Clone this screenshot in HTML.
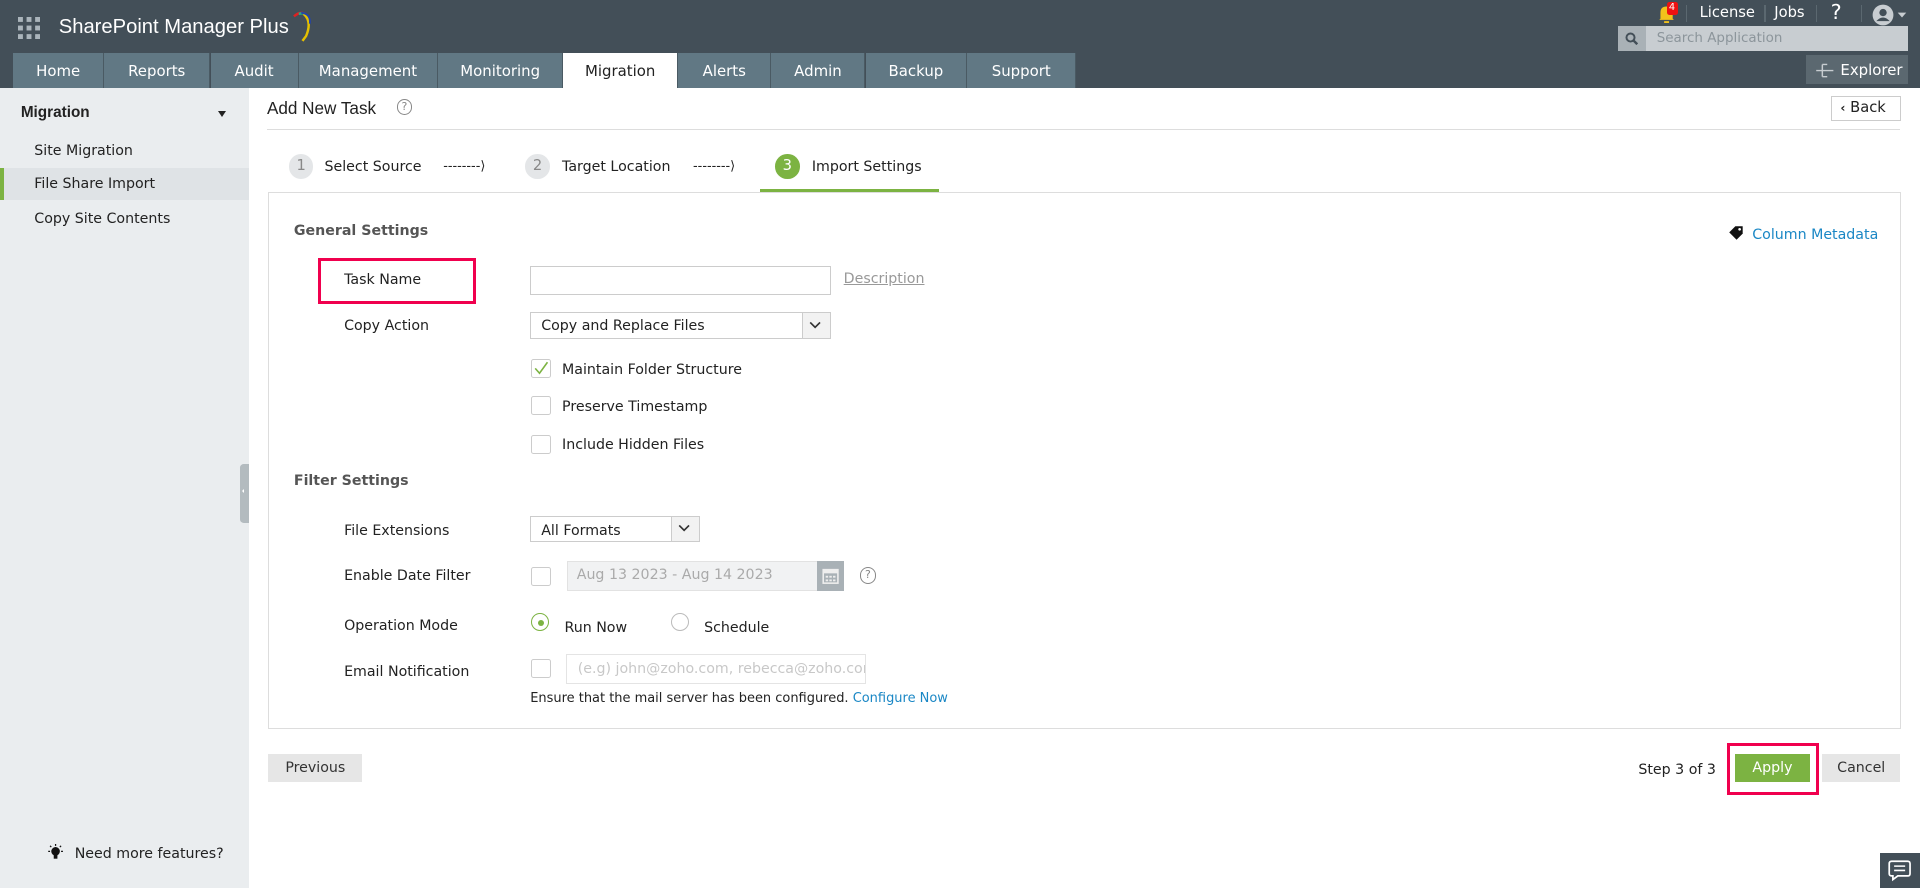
<!DOCTYPE html>
<html><head><meta charset="utf-8"><style>
html,body{margin:0;padding:0;overflow:hidden;background:#fff}
#root{zoom:1.22449;width:1568px;height:725px;position:relative;font-family:"DejaVu Sans","Liberation Sans",sans-serif;font-size:11.6px;color:#222;overflow:hidden}
.a{position:absolute}
.hdr{left:0;top:0;width:1568px;height:72px;background:#434f58}
.tab{top:43px;height:29px;background:#617884;color:#fff;font-size:12.2px;line-height:30px;text-align:center;border-right:1px solid #4a5a63}
.tab.act{background:#fff;color:#222}
.side{left:0;top:72px;width:203px;height:653px;background:#eaedef}
.lbl{font-size:11.6px;color:#222;margin-top:1px}
.cb{width:14px;height:14px;border:1px solid #ccc;background:#fff;border-radius:2px}
.inp{border:1px solid #ccc;background:#fff}
.sec{font-weight:bold;color:#555;font-size:11.6px;margin-top:1px}
</style></head><body><div id="root">
<div class="a hdr"></div>
<svg class="a" style="left:15px;top:14px" width="18" height="18"><g fill="#aab4bb"><rect x="0" y="0" width="4" height="4"/><rect x="7" y="0" width="4" height="4"/><rect x="14" y="0" width="4" height="4"/><rect x="0" y="7" width="4" height="4"/><rect x="7" y="7" width="4" height="4"/><rect x="14" y="7" width="4" height="4"/><rect x="0" y="14" width="4" height="4"/><rect x="7" y="14" width="4" height="4"/><rect x="14" y="14" width="4" height="4"/></g></svg>
<div class="a" style="left:48px;top:13px;color:#fff;font-size:16.5px;font-family:'Liberation Sans',sans-serif">SharePoint Manager Plus</div>
<svg class="a" style="left:236px;top:7px" width="20" height="28"><path d="M4 6 Q10 1 14 5" stroke="#d22" stroke-width="2" fill="none"/><path d="M8 4 Q15 2 16 10" stroke="#2a8" stroke-width="2" fill="none"/><path d="M12 4 Q19 10 14 22 L11 26" stroke="#e5c000" stroke-width="2" fill="none"/><path d="M10 3 Q18 4 17 12" stroke="#24a" stroke-width="1.5" fill="none"/></svg>
<div class="a tab" style="left:11px;width:73px">Home</div>
<div class="a tab" style="left:85px;width:86px">Reports</div>
<div class="a tab" style="left:172px;width:71px">Audit</div>
<div class="a tab" style="left:244px;width:113px">Management</div>
<div class="a tab" style="left:358px;width:101px">Monitoring</div>
<div class="a tab act" style="left:460px;width:93px">Migration</div>
<div class="a tab" style="left:554px;width:75px">Alerts</div>
<div class="a tab" style="left:630px;width:76px">Admin</div>
<div class="a tab" style="left:707px;width:82px">Backup</div>
<div class="a tab" style="left:790px;width:88px">Support</div>
<svg class="a" style="left:1354px;top:3px" width="14" height="16"><path d="M2 12 L2 7 Q2 2 7 2 Q12 2 12 7 L12 12 L13 13 L1 13 Z" fill="#f2c21b"/><rect x="5" y="14" width="4" height="2" fill="#f2c21b"/></svg>
<div class="a" style="left:1361px;top:2px;width:9px;height:10px;background:#e11;color:#fff;font-size:8px;line-height:10px;text-align:center;border-radius:2px">4</div>
<div class="a" style="left:1377px;top:4px;width:1px;height:14px;background:#5b6870"></div>
<div class="a" style="left:1388px;top:3px;color:#fff;font-size:12px">License</div>
<div class="a" style="left:1441px;top:4px;width:1px;height:14px;background:#5b6870"></div>
<div class="a" style="left:1449px;top:3px;color:#fff;font-size:12px">Jobs</div>
<div class="a" style="left:1483px;top:4px;width:1px;height:14px;background:#5b6870"></div>
<div class="a" style="left:1495px;top:0px;color:#fff;font-size:17px">?</div>
<div class="a" style="left:1520px;top:4px;width:1px;height:14px;background:#5b6870"></div>
<svg class="a" style="left:1529px;top:3px" width="32" height="18"><circle cx="9" cy="9" r="8.5" fill="#c8cdd1"/><circle cx="9" cy="7" r="3" fill="#434f58"/><path d="M3.5 14 Q9 8 14.5 14" fill="#434f58"/><path d="M21 7 L28 7 L24.5 11Z" fill="#c8cdd1"/></svg>
<div class="a" style="left:1321px;top:21px;width:237px;height:21px;background:#c8cdd1"></div>
<div class="a" style="left:1321px;top:21px;width:23px;height:21px;background:#a9b1b6"></div>
<svg class="a" style="left:1327px;top:26px" width="11" height="11"><circle cx="4.5" cy="4.5" r="3.3" stroke="#434f58" stroke-width="1.6" fill="none"/><path d="M7 7 L10 10" stroke="#434f58" stroke-width="2"/></svg>
<div class="a" style="left:1353px;top:25px;color:#8c959b;font-size:11px">Search Application</div>
<div class="a" style="left:1475px;top:45px;width:83px;height:24px;background:#5b6870"></div>
<svg class="a" style="left:1482px;top:51px" width="16" height="14"><g stroke="#c8cdd1" stroke-width="1.2" fill="none"><path d="M1 7 H15 M6 2 V12 M6 2 H10 M6 12 H10"/></g></svg>
<div class="a" style="left:1503px;top:50px;color:#fff;font-size:12.2px">Explorer</div>
<div class="a side"></div>
<div class="a" style="left:17px;top:85px;font-size:12.5px;font-weight:bold;color:#222;font-family:'Liberation Sans',sans-serif">Migration</div>
<div class="a" style="left:178px;top:91px;width:0;height:0;border-left:4px solid transparent;border-right:4px solid transparent;border-top:5px solid #222"></div>
<div class="a lbl" style="left:28px;top:116px">Site Migration</div>
<div class="a" style="left:0;top:137px;width:203px;height:26px;background:#dfe3e6"></div>
<div class="a" style="left:0;top:137px;width:3px;height:26px;background:#7cb342"></div>
<div class="a lbl" style="left:28px;top:143px">File Share Import</div>
<div class="a lbl" style="left:28px;top:171px">Copy Site Contents</div>
<div class="a" style="left:196px;top:379px;width:7px;height:48px;background:#b3bbbf;border-radius:3px 0 0 3px"></div>
<div class="a" style="left:198px;top:399px;width:0;height:0;border-top:2px solid transparent;border-bottom:2px solid transparent;border-right:2px solid #fff"></div>
<svg class="a" style="left:38px;top:689px" width="14" height="14"><circle cx="7" cy="6" r="3.5" fill="#111"/><rect x="5.5" y="9" width="3" height="3" fill="#111"/><g stroke="#111" stroke-width="1"><path d="M7 0 V1.5 M1 6 H2.5 M11.5 6 H13 M2.5 1.5 L3.5 2.5 M11.5 1.5 L10.5 2.5"/></g></svg>
<div class="a" style="left:61px;top:691px;font-size:11.6px;color:#222">Need more features?</div>
<div class="a" style="left:218px;top:80px;font-size:14px;color:#222;font-family:'Liberation Sans',sans-serif">Add New Task</div>
<div class="a" style="left:324px;top:81px;width:11px;height:11px;border:1px solid #888;border-radius:50%;font-size:9px;line-height:11px;text-align:center;color:#888">?</div>
<div class="a" style="left:1495px;top:78px;width:56px;height:19px;border:1px solid #ccc;background:#fff"></div>
<div class="a" style="left:1503px;top:81px;font-size:12px;color:#222"><b style="font-size:10px">&lsaquo;</b> Back</div>
<div class="a" style="left:218px;top:105px;width:1334px;height:1px;background:#ddd"></div>
<div class="a" style="left:236px;top:126px;width:20px;height:20px;border-radius:50%;background:#e4e6e8;color:#888;font-size:12px;line-height:20px;text-align:center">1</div>
<div class="a lbl" style="left:265px;top:129px">Select Source</div>
<div class="a" style="left:362px;top:130px;font-size:10.5px">--------&rang;</div>
<div class="a" style="left:429px;top:126px;width:20px;height:20px;border-radius:50%;background:#e4e6e8;color:#888;font-size:12px;line-height:20px;text-align:center">2</div>
<div class="a lbl" style="left:459px;top:129px">Target Location</div>
<div class="a" style="left:566px;top:130px;font-size:10.5px">--------&rang;</div>
<div class="a" style="left:633px;top:126px;width:20px;height:20px;border-radius:50%;background:#7cb342;color:#fff;font-size:12px;line-height:20px;text-align:center">3</div>
<div class="a lbl" style="left:663px;top:129px">Import Settings</div>
<div class="a" style="left:621px;top:154px;width:146px;height:3px;background:#7cb342"></div>
<div class="a" style="left:219px;top:157px;width:1332px;height:437px;border:1px solid #ddd"></div>
<div class="a sec" style="left:240px;top:181px">General Settings</div>
<svg class="a" style="left:1411px;top:184px" width="14" height="13"><path d="M1 6 L6 1 L12 1 L12 7 L7 12 Z" fill="#111"/><circle cx="9.5" cy="3.5" r="1.1" fill="#fff"/></svg>
<div class="a" style="left:1431px;top:185px;color:#1a87c5;font-size:11.6px">Column Metadata</div>
<div class="a" style="left:260px;top:211px;width:124px;height:32px;border:3px solid #f0004e"></div>
<div class="a lbl" style="left:281px;top:221px">Task Name</div>
<div class="a inp" style="left:433px;top:217px;width:244px;height:22px"></div>
<div class="a" style="left:689px;top:221px;color:#999;font-size:11.6px;text-decoration:underline">Description</div>
<div class="a lbl" style="left:281px;top:259px">Copy Action</div>
<div class="a inp" style="left:433px;top:255px;width:244px;height:20px"></div>
<div class="a" style="left:655px;top:256px;width:22px;height:20px;background:#f2f2f2;border-left:1px solid #ccc"></div>
<svg class="a" style="left:661px;top:261px" width="10" height="8"><path d="M1 2 L5 6 L9 2" stroke="#333" stroke-width="1.4" fill="none"/></svg>
<div class="a lbl" style="left:442px;top:259px">Copy and Replace Files</div>
<div class="a cb" style="left:434px;top:293px"></div>
<svg class="a" style="left:436px;top:295px" width="12" height="12"><path d="M1 6 L4.5 10 L11 1" stroke="#7cb342" stroke-width="1.3" fill="none"/></svg>
<div class="a lbl" style="left:459px;top:295px">Maintain Folder Structure</div>
<div class="a cb" style="left:434px;top:323px"></div>
<div class="a lbl" style="left:459px;top:325px">Preserve Timestamp</div>
<div class="a cb" style="left:434px;top:355px"></div>
<div class="a lbl" style="left:459px;top:356px">Include Hidden Files</div>
<div class="a sec" style="left:240px;top:385px">Filter Settings</div>
<div class="a lbl" style="left:281px;top:426px">File Extensions</div>
<div class="a inp" style="left:433px;top:421px;width:137px;height:20px"></div>
<div class="a" style="left:548px;top:422px;width:22px;height:20px;background:#f2f2f2;border-left:1px solid #ccc"></div>
<svg class="a" style="left:554px;top:427px" width="10" height="8"><path d="M1 2 L5 6 L9 2" stroke="#333" stroke-width="1.4" fill="none"/></svg>
<div class="a lbl" style="left:442px;top:426px">All Formats</div>
<div class="a lbl" style="left:281px;top:463px">Enable Date Filter</div>
<div class="a cb" style="left:434px;top:463px"></div>
<div class="a" style="left:463px;top:458px;width:204px;height:23px;background:#f1f2f3;border:1px solid #e2e2e2"></div>
<div class="a" style="left:471px;top:463px;color:#aaa;font-size:11.6px">Aug 13 2023 - Aug 14 2023</div>
<div class="a" style="left:667px;top:458px;width:22px;height:25px;background:#a9b1b6"></div>
<svg class="a" style="left:671px;top:462px" width="14" height="16"><rect x="1" y="3" width="12" height="11" fill="none" stroke="#eee" stroke-width="1.3"/><rect x="1" y="3" width="12" height="3" fill="#eee"/><g fill="#eee"><rect x="3" y="8" width="2" height="1.5"/><rect x="6" y="8" width="2" height="1.5"/><rect x="9" y="8" width="2" height="1.5"/><rect x="3" y="11" width="2" height="1.5"/><rect x="6" y="11" width="2" height="1.5"/><rect x="9" y="11" width="2" height="1.5"/></g></svg>
<div class="a" style="left:702px;top:463px;width:12px;height:12px;border:1px solid #888;border-radius:50%;font-size:9px;line-height:12px;text-align:center;color:#888">?</div>
<div class="a lbl" style="left:281px;top:504px">Operation Mode</div>
<div class="a" style="left:434px;top:501px;width:13px;height:13px;border:1.5px solid #7cb342;border-radius:50%"></div>
<div class="a" style="left:439px;top:506px;width:5px;height:5px;background:#7cb342;border-radius:50%"></div>
<div class="a lbl" style="left:461px;top:505px">Run Now</div>
<div class="a" style="left:548px;top:501px;width:13px;height:13px;border:1.5px solid #bbb;border-radius:50%"></div>
<div class="a lbl" style="left:575px;top:505px">Schedule</div>
<div class="a lbl" style="left:281px;top:541px">Email Notification</div>
<div class="a cb" style="left:434px;top:538px"></div>
<div class="a inp" style="left:462px;top:534px;width:244px;height:23px;border-color:#e4e4e4;overflow:hidden"><span style="position:absolute;left:9px;top:5px;color:#c8c8c8;font-size:11.6px;white-space:nowrap">(e.g) john@zoho.com, rebecca@zoho.com</span></div>
<div class="a" style="left:433px;top:564px;font-size:10.6px;color:#222">Ensure that the mail server has been configured. <span style="color:#1a87c5">Configure Now</span></div>
<div class="a" style="left:219px;top:616px;width:77px;height:23px;background:#e6e6e6;color:#333;font-size:11.6px;line-height:24px;text-align:center">Previous</div>
<div class="a" style="left:1338px;top:622px;font-size:11.6px;color:#222">Step 3 of 3</div>
<div class="a" style="left:1410px;top:607px;width:71px;height:37px;border:3px solid #f0004e"></div>
<div class="a" style="left:1417px;top:616px;width:61px;height:23px;background:#7cb342;color:#fff;font-size:11.6px;line-height:24px;text-align:center">Apply</div>
<div class="a" style="left:1488px;top:616px;width:64px;height:23px;background:#e6e6e6;color:#333;font-size:11.6px;line-height:24px;text-align:center">Cancel</div>
<div class="a" style="left:1535px;top:697px;width:33px;height:28px;background:#434f58"></div>
<svg class="a" style="left:1542px;top:702px" width="19" height="18"><path d="M3 1 H16 Q18 1 18 3 V11 Q18 13 16 13 H8 L4 16 V13 H3 Q1 13 1 11 V3 Q1 1 3 1Z" stroke="#fff" stroke-width="1.4" fill="none"/><path d="M5 5 H14 M5 8.5 H14" stroke="#fff" stroke-width="1.3"/></svg>
</div></body></html>
